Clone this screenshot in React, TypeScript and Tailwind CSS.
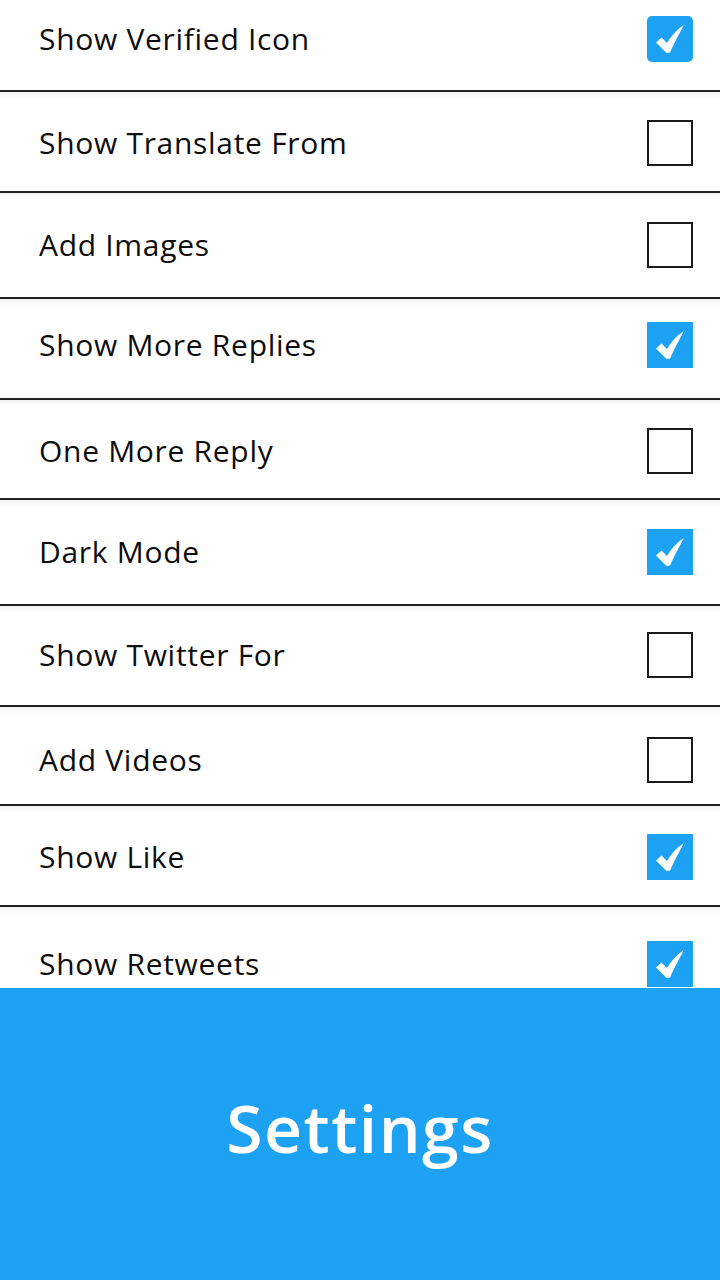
import React from "react";

type Row = { label: string; checked: boolean; h: number; off: number; rounded?: boolean };

const rows: Row[] = [
  { label: "Show Verified Icon", checked: true, h: 92, off: -6, rounded: true },
  { label: "Show Translate From", checked: false, h: 101, off: 1 },
  { label: "Add Images", checked: false, h: 106, off: 0 },
  { label: "Show More Replies", checked: true, h: 101, off: -4 },
  { label: "One More Reply", checked: false, h: 100, off: 2 },
  { label: "Dark Mode", checked: true, h: 106, off: 0 },
  { label: "Show Twitter For", checked: false, h: 101, off: -1 },
  { label: "Add Videos", checked: false, h: 99, off: 4 },
  { label: "Show Like", checked: true, h: 101, off: 1 },
  { label: "Show Retweets", checked: true, h: 101, off: 6 },
];

function Check() {
  return (
    <svg viewBox="0 0 46 46" className="w-[46px] h-[46px]">
      <path
        d="M9 26.5 L14.5 21.5 L20 27 C24 20 29.5 14 36.5 9 C35.5 13 30.5 20 23 36.5 L19.5 37 Z"
        fill="#ffffff"
      />
    </svg>
  );
}

export default function App() {
  return (
    <div
      className="w-[720px] h-[1280px] flex flex-col bg-white overflow-hidden"
      style={{ fontFamily: '"Open Sans", "Noto Sans", sans-serif' }}
    >
      <div className="flex-1 overflow-hidden flex flex-col">
        {rows.map((r, i) => (
          <div
            key={i}
            className={`shrink-0 flex items-center justify-between pl-[39px] pr-[27px] ${
              i < rows.length - 1 ? "border-b-2 border-[#222222]" : ""
            } ${i > 0 ? "shadow-[inset_0_8px_6px_-6px_rgba(0,0,0,0.08)]" : ""}`}
            style={{ height: r.h }}
          >
            <div
              className="flex-1 flex items-center justify-between"
              style={{ transform: `translateY(${r.off}px)` }}
            >
              <span className="text-[30px] text-[#0d0d0d] tracking-[0.7px] leading-none">{r.label}</span>
              {r.checked ? (
                <div
                  className={`w-[46px] h-[46px] bg-[#1da1f2] flex items-center justify-center ${
                    r.rounded ? "rounded-[5px]" : ""
                  }`}
                >
                  <Check />
                </div>
              ) : (
                <div className="w-[46px] h-[46px] border-[2.5px] border-[#1a1a1a] bg-white" />
              )}
            </div>
          </div>
        ))}
      </div>
      <div className="h-[292px] shrink-0 bg-[#1da1f2] flex items-center justify-center">
        <span className="text-white text-[66px] font-semibold leading-none tracking-[1.5px] pb-[14px]">Settings</span>
      </div>
    </div>
  );
}
